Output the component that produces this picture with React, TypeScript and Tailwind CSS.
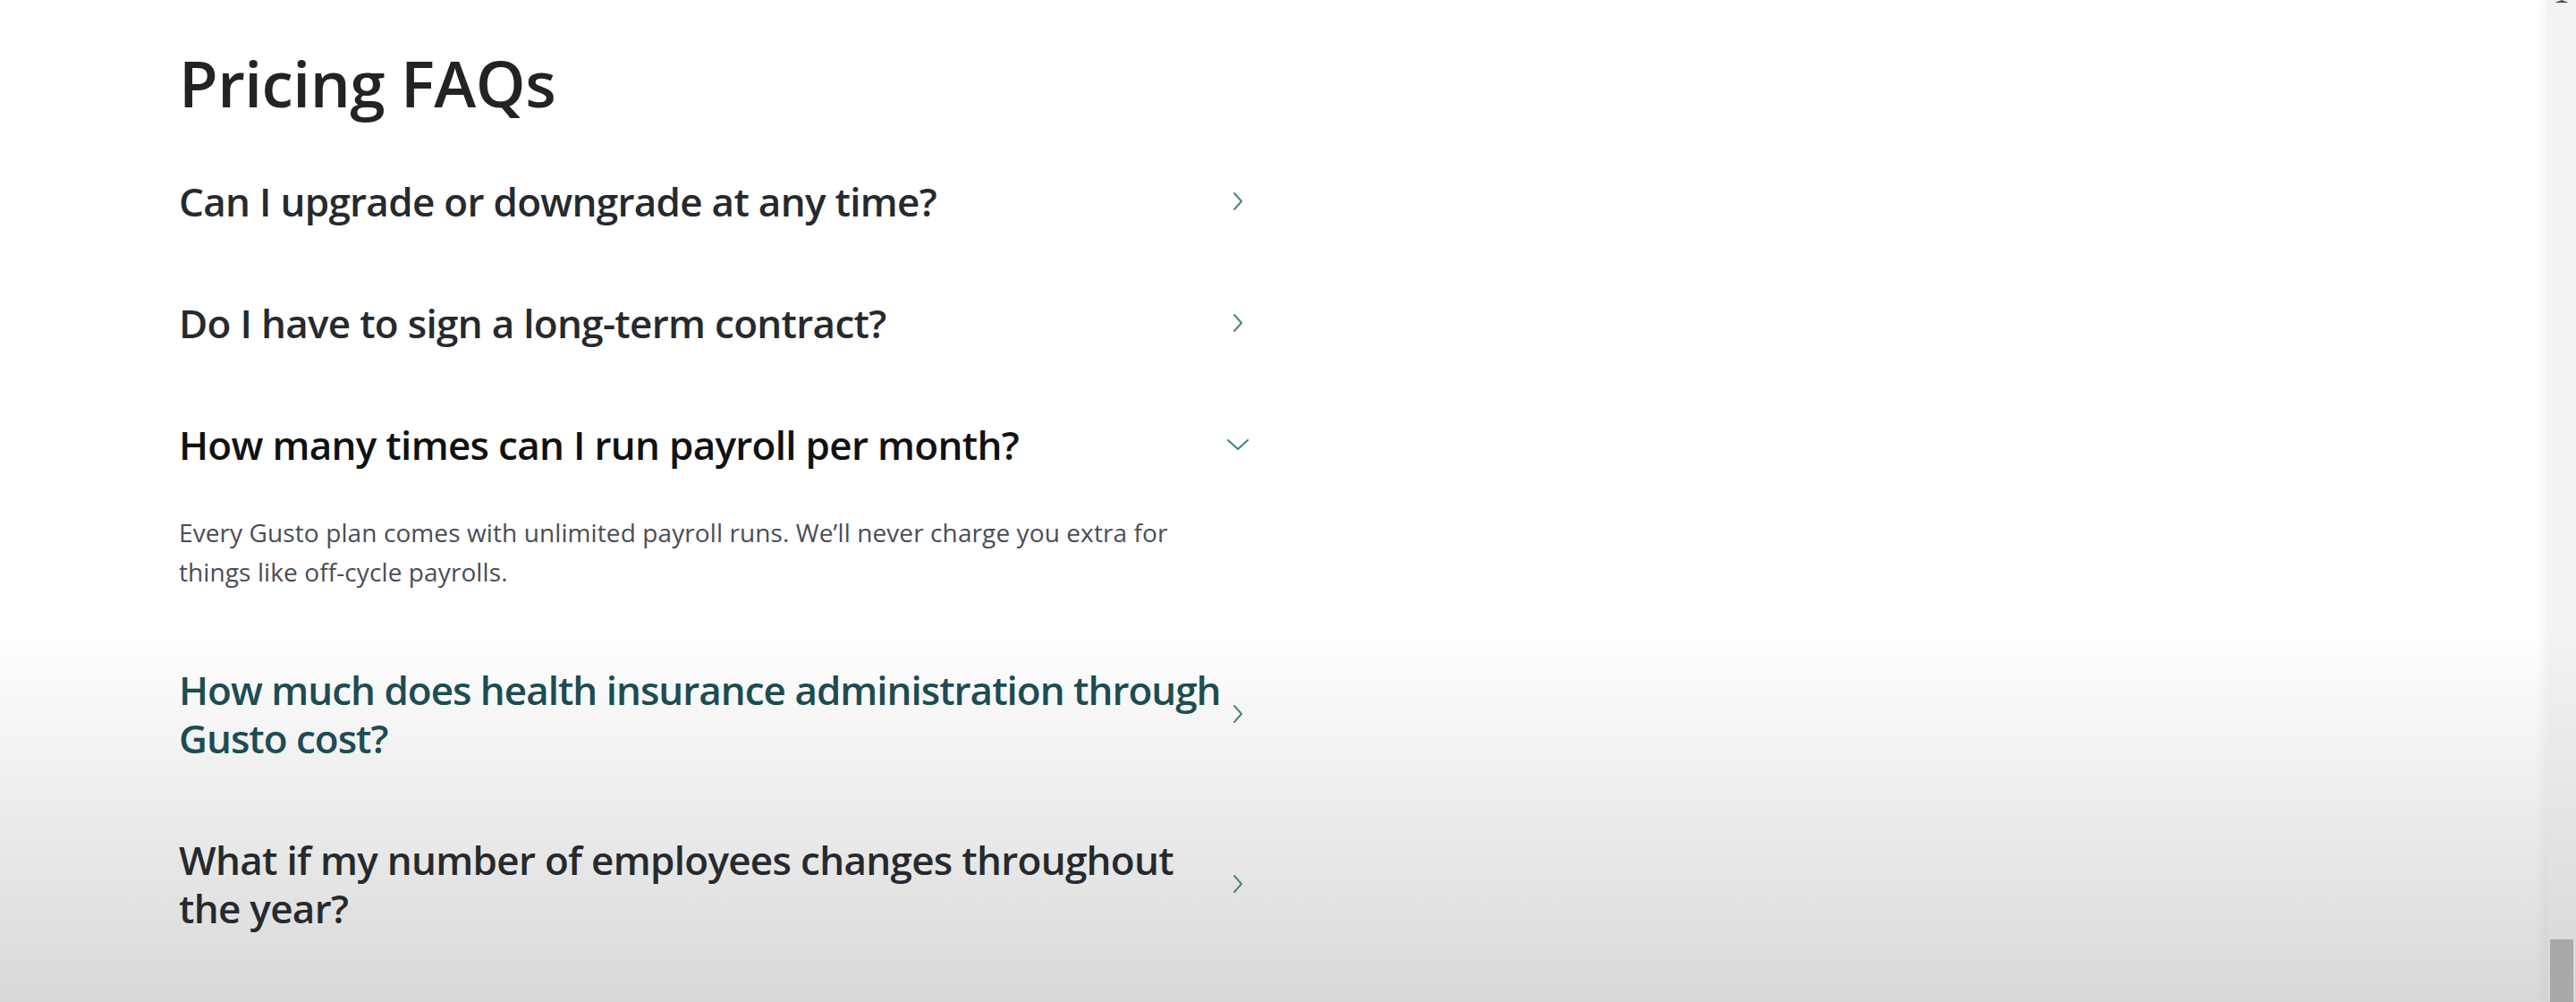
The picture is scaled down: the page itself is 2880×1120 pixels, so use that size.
import { useState } from 'react';

interface Faq {
  question: string;
  answer: string;
}

const faqs: Faq[] = [
  {
    question: 'Can I upgrade or downgrade at any time?',
    answer: 'Yes. You can switch plans whenever you need to from your account settings.',
  },
  {
    question: 'Do I have to sign a long-term contract?',
    answer: 'No. All Gusto plans are month to month and you can cancel at any time.',
  },
  {
    question: 'How many times can I run payroll per month?',
    answer:
      'Every Gusto plan comes with unlimited payroll runs. We\u2019ll never charge you extra for things like off-cycle payrolls.',
  },
  {
    question: 'How much does health insurance administration through\nGusto cost?',
    answer: 'Health insurance administration is included with every plan.',
  },
  {
    question: 'What if my number of employees changes throughout\nthe year?',
    answer: 'Your monthly price adjusts automatically based on the people you pay.',
  },
];

function Chevron({ open }: { open: boolean }) {
  if (open) {
    return (
      <svg width="26" height="14" viewBox="0 0 26 14" fill="none" className="text-[#2f8782]">
        <path d="M2 2l11 10L24 2" stroke="currentColor" strokeWidth="2" strokeLinecap="round" strokeLinejoin="round" />
      </svg>
    );
  }
  return (
    <svg width="14" height="24" viewBox="0 0 14 24" fill="none" className="text-[#4f8281]">
      <path d="M3 3l8 9-8 9" stroke="currentColor" strokeWidth="2" strokeLinecap="round" strokeLinejoin="round" />
    </svg>
  );
}

export default function App() {
  const [openIndex, setOpenIndex] = useState<number>(2);
  const hovered = 3;

  return (
    <div className="flex min-h-[1120px] w-full bg-[linear-gradient(to_bottom,#ffffff_63%,#d8d8d8_100%)] font-['Open_Sans',sans-serif]">
      <main className="flex-1 pl-[200px] pt-[50px]">
        <div className="w-[1197px]">
          <h2 className="text-[71px] leading-[85px] font-semibold tracking-[-0.5px] text-[#232323]">
            Pricing FAQs
          </h2>
          <div className="mt-[22px]">
            {faqs.map((faq, i) => {
              const open = openIndex === i;
              const color = open
                ? 'text-[#111111] tracking-[-0.7px]'
                : i === hovered
                  ? 'text-[#1d4c53] tracking-[-1px]'
                  : 'text-[#262a2e] tracking-[-0.7px]';
              return (
                <div key={faq.question}>
                  <button
                    type="button"
                    onClick={() => setOpenIndex(open ? -1 : i)}
                    className="flex w-full items-center gap-1 py-[41px] text-left"
                  >
                    <span className={`min-w-0 flex-1 whitespace-pre text-[44px] leading-[54px] font-semibold ${color}`}>
                      {faq.question}
                    </span>
                    <span className="flex w-[26px] shrink-0 justify-center">
                      <Chevron open={open} />
                    </span>
                  </button>
                  {open && (
                    <p className="mt-[8px] max-w-[1150px] pb-[42px] text-[28px] leading-[44px] tracking-[0.1px] text-[#4a4d57]">
                      {faq.answer}
                    </p>
                  )}
                </div>
              );
            })}
          </div>
        </div>
      </main>

      {/* browser scrollbar */}
      <div className="relative flex w-[32px] flex-col justify-between bg-[linear-gradient(to_bottom,#f3f3f3_63%,#d6d6d6_100%)] shadow-[-6px_0_10px_rgba(0,0,0,0.04)]">
        <div className="mx-auto h-0 w-0 border-x-[8px] border-t-0 border-b-[3px] border-x-transparent border-b-[#505050]" />
        <div className="mx-auto h-[70px] w-[26px] bg-[#a9a9a9]" />
      </div>
    </div>
  );
}
